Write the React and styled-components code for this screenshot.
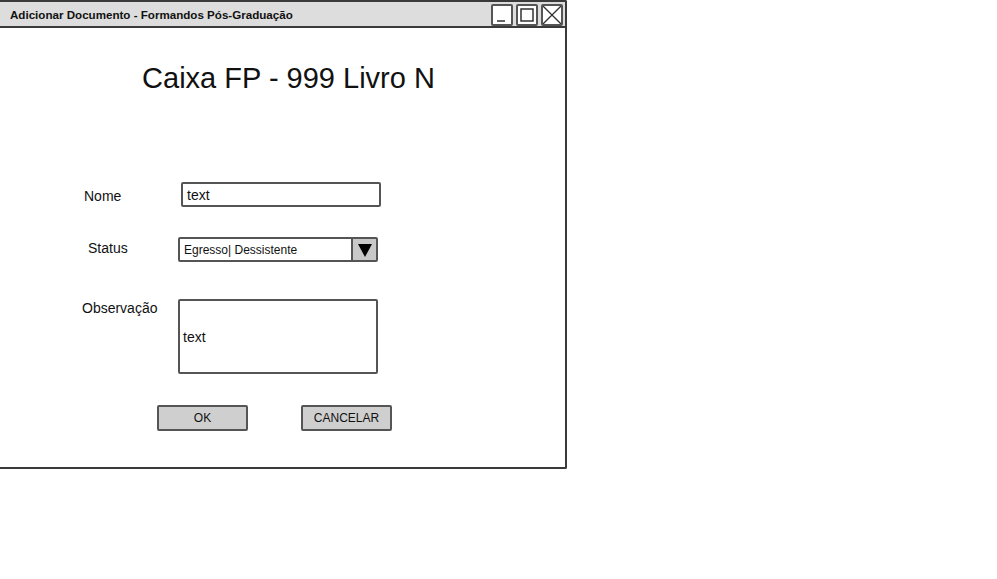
import React from 'react';
import styled, { createGlobalStyle } from 'styled-components';

const GlobalStyle = createGlobalStyle`
  html, body {
    margin: 0;
    padding: 0;
    background: #ffffff;
  }
  body {
    font-family: "Liberation Sans", Arial, sans-serif;
    color: #111;
  }
  * {
    box-sizing: border-box;
  }
`;

const Page = styled.div`
  width: 997px;
  height: 579px;
  overflow: hidden;
`;

const Window = styled.div`
  width: 567px;
  height: 469px;
  border: 2px solid #3a3a3a;
  border-left: none;
  border-radius: 0 2px 2px 0;
  display: flex;
  flex-direction: column;
  background: #fff;
`;

const TitleBar = styled.div`
  height: 26px;
  background: #dddddd;
  border-bottom: 2px solid #3a3a3a;
  display: flex;
  align-items: center;
  justify-content: space-between;
  padding: 0 2px 0 10px;
`;

const TitleText = styled.span`
  font-size: 11.6px;
  font-weight: 700;
  color: #111;
`;

const Controls = styled.div`
  display: flex;
  gap: 3px;
  margin-top: 1px;
`;

const ControlBox = styled.div`
  width: 22px;
  height: 22px;
  border: 2px solid #555;
  border-radius: 2px;
  background: #fff;
  display: flex;
  align-items: center;
  justify-content: center;
`;

const Heading = styled.h1`
  margin: 33px 0 0;
  font-size: 29px;
  line-height: 34px;
  font-weight: 400;
  text-align: center;
  padding-left: 12px;
  color: #111;
`;

const Form = styled.div`
  margin-top: 87px;
  padding-left: 82px;
  display: grid;
  grid-template-columns: 96px 204px;
  row-gap: 30px;
`;

const Label = styled.div`
  font-size: 14px;
  padding-left: ${p => p.$indent || 0}px;
  align-self: ${p => p.$align || 'center'};
  margin-top: ${p => p.$shift || 0}px;
  color: #111;
`;

const Field = styled.div`
  margin-left: ${p => p.$indent || 0}px;
  width: 200px;
  height: ${p => p.$height || 25}px;
  margin-top: ${p => p.$top || 0}px;
  border: 2px solid #555;
  border-radius: 2px;
  display: flex;
  align-items: center;
  font-size: ${p => p.$size || 14}px;
  padding-left: ${p => p.$pad || 4}px;
  color: #111;
  background: #fff;
`;

const SelectText = styled.span`
  flex: 1;
`;

const ArrowButton = styled.div`
  width: 25px;
  align-self: stretch;
  border-left: 2px solid #555;
  background: #c8c8c8;
  display: flex;
  align-items: center;
  justify-content: center;
`;

const Buttons = styled.div`
  margin-top: 31px;
  padding-left: 157px;
  display: flex;
  gap: 53px;
`;

const Button = styled.div`
  width: 91px;
  height: 26px;
  border: 2px solid #555;
  border-radius: 2px;
  background: #cfcfcf;
  display: flex;
  align-items: center;
  justify-content: center;
  font-size: 12px;
  color: #111;
`;

function App() {
  return (
    <Page>
      <GlobalStyle />
      <Window>
        <TitleBar>
          <TitleText>Adicionar Documento - Formandos Pós-Graduação</TitleText>
          <Controls>
            <ControlBox>
              <svg width="18" height="18" viewBox="0 0 18 18">
                <line x1="4" y1="15" x2="12" y2="15" stroke="#333" strokeWidth="1.5" />
              </svg>
            </ControlBox>
            <ControlBox>
              <svg width="18" height="18" viewBox="0 0 18 18">
                <rect x="3" y="3" width="12" height="12" fill="none" stroke="#333" strokeWidth="1.5" />
              </svg>
            </ControlBox>
            <ControlBox>
              <svg width="18" height="18" viewBox="0 0 18 18">
                <line x1="0" y1="0" x2="18" y2="18" stroke="#333" strokeWidth="1.3" />
                <line x1="18" y1="0" x2="0" y2="18" stroke="#333" strokeWidth="1.3" />
              </svg>
            </ControlBox>
          </Controls>
        </TitleBar>

        <Heading>Caixa FP - 999 Livro N</Heading>

        <Form>
          <Label $indent={2} $shift={2}>Nome</Label>
          <Field $indent={3} $pad={4}>text</Field>

          <Label $indent={6} $shift={-4}>Status</Label>
          <Field $size={12} $pad={4}>
            <SelectText>Egresso| Dessistente</SelectText>
            <ArrowButton>
              <svg width="16" height="16" viewBox="0 0 16 16">
                <polygon points="1,2 15,2 8,15" fill="#000" />
              </svg>
            </ArrowButton>
          </Field>

          <Label $align="start" $shift={8}>Observação</Label>
          <Field $height={75} $top={7} $pad={3}>text</Field>
        </Form>

        <Buttons>
          <Button>OK</Button>
          <Button>CANCELAR</Button>
        </Buttons>
      </Window>
    </Page>
  );
}

export default App;
